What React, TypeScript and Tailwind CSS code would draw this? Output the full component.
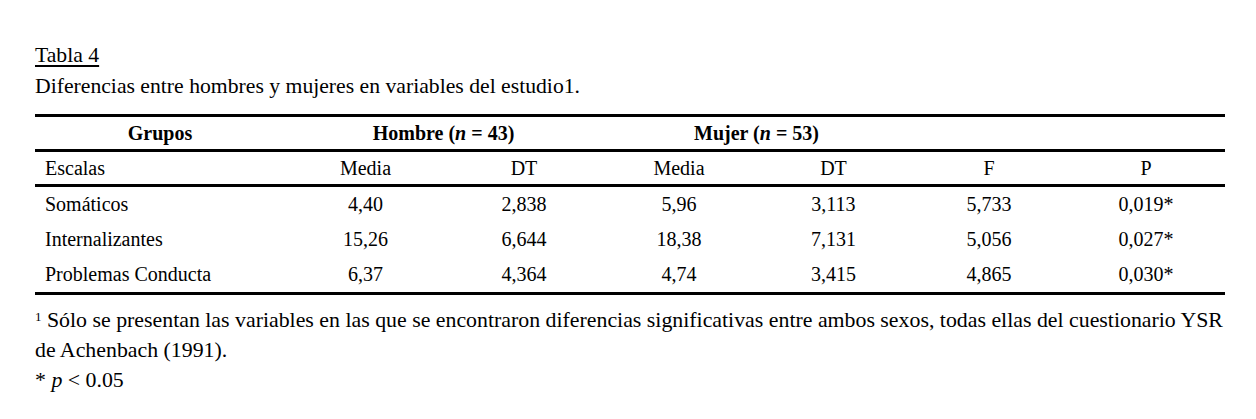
const rows = [
  { name: "Somáticos", m1: "4,40", dt1: "2,838", m2: "5,96", dt2: "3,113", f: "5,733", p: "0,019*" },
  { name: "Internalizantes", m1: "15,26", dt1: "6,644", m2: "18,38", dt2: "7,131", f: "5,056", p: "0,027*" },
  { name: "Problemas Conducta", m1: "6,37", dt1: "4,364", m2: "4,74", dt2: "3,415", f: "4,865", p: "0,030*" },
]

const cols = "grid grid-cols-[250px_161px_156px_154px_155px_156px_158px]"

export default function App() {
  return (
    <div className="min-h-screen bg-white text-black font-[Liberation_Serif,Times_New_Roman,serif] text-[20px] pl-[35px] pt-[40px]">
      {/* Caption */}
      <div className="text-[21.7px] leading-[31px]">
        <div className="underline underline-offset-[3px]">Tabla 4</div>
        <div>Diferencias entre hombres y mujeres en variables del estudio1.</div>
      </div>

      {/* Table */}
      <div className="w-[1190px] mt-[12px]">
        <div className="border-t-[3px] border-black" />
        <div className={`${cols} leading-[32px] font-bold`}>
          <div className="text-center">Grupos</div>
          <div className="col-span-2 text-center">
            Hombre (<i>n</i> = 43)
          </div>
          <div className="col-span-2 text-center">
            Mujer (<i>n</i> = 53)
          </div>
          <div />
          <div />
        </div>
        <div className="border-t-[3px] border-black" />
        <div className={`${cols} leading-[32px]`}>
          <div className="pl-[10px]">Escalas</div>
          <div className="text-center">Media</div>
          <div className="text-center">DT</div>
          <div className="text-center">Media</div>
          <div className="text-center">DT</div>
          <div className="text-center">F</div>
          <div className="text-center">P</div>
        </div>
        <div className="border-t-[3px] border-black" />
        {rows.map((r) => (
          <div key={r.name} className={`${cols} leading-[35px]`}>
            <div className="pl-[10px]">{r.name}</div>
            <div className="text-center">{r.m1}</div>
            <div className="text-center">{r.dt1}</div>
            <div className="text-center">{r.m2}</div>
            <div className="text-center">{r.dt2}</div>
            <div className="text-center">{r.f}</div>
            <div className="text-center">{r.p}</div>
          </div>
        ))}
        <div className="border-t-[3px] border-black" />
      </div>

      {/* Notes */}
      <div className="w-[1210px] mt-[10px] text-[21.85px] leading-[30px]">
        <div className="whitespace-nowrap">
          <sup className="text-[13px]">1</sup> Sólo se presentan las variables en las que se encontraron diferencias significativas entre ambos sexos, todas ellas del cuestionario YSR
        </div>
        <div>de Achenbach (1991).</div>
        <div>
          * <i>p</i> &lt; 0.05
        </div>
      </div>
    </div>
  )
}
